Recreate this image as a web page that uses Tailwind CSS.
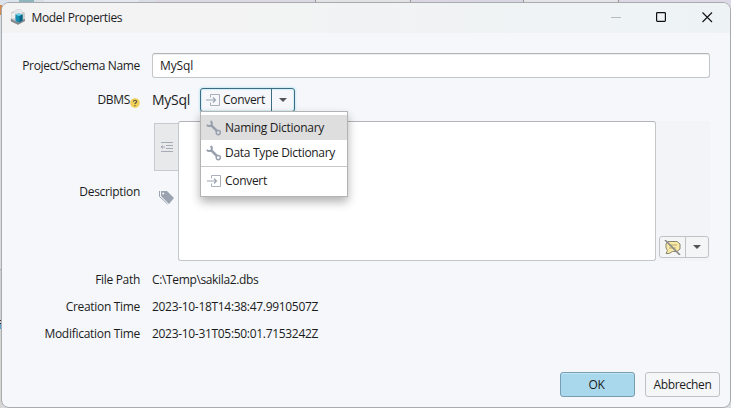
<!DOCTYPE html>
<html lang="en">
<head>
<meta charset="utf-8">
<title>Model Properties</title>
<script src="https://cdn.jsdelivr.net/npm/@tailwindcss/browser@4"></script>
</head>
<body class="w-[731px] h-[408px] overflow-hidden relative bg-[#dadbe0] font-['Open_Sans','Noto_Sans',sans-serif] text-[12px] leading-[18px] tracking-[-0.31px] text-[#1c1c1c]">
<svg width="0" height="0" class="absolute">
  <symbol id="convert" viewBox="0 0 14 14"><path d="M4.500 4.500V1.500h9v11h-9v-3" fill="none" stroke="#a9afbb"/><path d="M0 7h9.500M7 4.500 9.500 7 7 9.500" fill="none" stroke="#9ca3b0" stroke-width="1.100"/></symbol>
  <symbol id="wrench" viewBox="0 0 16 16"><path d="M.8 4.800C2.200 6.300 4 6.300 5.200 5.200 6.200 4 6 2.200 4.600 1" fill="none" stroke="#98a0ae" stroke-width="1.900"/><path d="M5.300 5.300 11 11" fill="none" stroke="#98a0ae" stroke-width="2.500"/><circle cx="12.300" cy="12.600" r="2.100" fill="none" stroke="#98a0ae" stroke-width="1.400"/></symbol>
</svg>
<!-- window behind the dialog -->
<div class="absolute inset-x-0 top-0 h-3 flex">
  <div class="w-[19px] bg-[#dce3ec]"></div><div class="w-[15px] bg-[#8eb4bc]"></div><div class="w-[10px] bg-[#d8dfe7]"></div><div class="w-[95px] bg-[#e4e8ee]"></div><div class="w-[16px] bg-[#d9dde4]"></div><div class="w-[161px] bg-[#dcd8e3] border-r border-[#96949d]"></div><div class="w-[95px] bg-[#e2e2e4] border-r border-[#96949d]"></div><div class="w-[113px] bg-[#dad6e2] border-r border-[#96949d]"></div><div class="w-[95px] bg-[#e4e4e6] border-r border-[#96949d]"></div><div class="grow bg-[#dcd8e6]"></div>
</div>
<div class="absolute left-0 top-0 w-[2px] h-full flex flex-col">
  <div class="h-[5px] bg-[#dce3ec]"></div><div class="h-[10px] bg-[#d18a4b]"></div><div class="h-[254px] bg-[#d8dce3]"></div><div class="h-px bg-[#a8a8ac]"></div><div class="h-[50px] bg-[#cfcfd3]"></div><div class="h-px bg-[#333]"></div><div class="h-[2px] bg-[#cfcfd3]"></div><div class="h-px bg-[#333]"></div><div class="h-[5px] bg-[#5ba4d4]"></div><div class="grow bg-[#d8d6d4]"></div>
</div>
<main class="absolute left-px top-[2px] w-[730px] h-[406px] rounded-[8px] border border-[#a9abaf] bg-[#f5f7fa] overflow-hidden flex flex-col">
  <header class="h-[30px] shrink-0 flex items-center pl-2 bg-linear-to-r from-[#f3f3f3] from-30% to-[#edf3f5]">
    <svg class="w-4 h-4 mb-[2px] shrink-0" viewBox="0 0 16 16"><path d="M1 3.500Q3 1.500 5 2.500V1Q9-.5 12 1v1.500Q14 2.500 15 4v8l-7 3.800L1 12.500Z" fill="#cbcdcf"/><path d="M5 1.500Q8.500 0 12 1.500v3H5Z" fill="#e6e8e9"/><path d="M.8 9.500 6 12.500 15 10v2l-7 3.800-7.200-3.500Z" fill="#85898d"/><path d="M1.500 4.500 5 3.500V9l-3.500.5Z" fill="#efefef"/><path d="m5.500 5.800 3-1.300 4 1v6l-3.500 2-3.500-1.500Z" fill="#168cb0"/><path d="m5.500 5.800 3-1.300 4 1-3.500 1.500Z" fill="#70d4e8"/><path d="m9.500 7 3-1.500v6l-3 1.700Z" fill="#0b6484"/></svg>
    <h1 class="ml-[5.5px] text-[12px] tracking-[-0.35px] whitespace-nowrap">Model Properties</h1>
    <div class="grow"></div>
    <svg class="w-[104px] h-3 mr-[17px] mb-[2px] shrink-0" viewBox="0 0 104 12"><path d="M2 6.500h10" stroke="#b9bdbf"/><rect x="47.600" y="1.600" width="8.800" height="8.800" rx=".8" fill="none" stroke="#111" stroke-width="1.200"/><path d="m93.500 1.500 9.500 9.500m0-9.500L93.500 11" stroke="#111" stroke-width="1.100"/></svg>
  </header>
  <form class="flex flex-col pt-5">
    <div class="h-[25px] flex items-center"><label class="w-[138px] text-right tracking-[-0.35px]">Project/Schema Name</label><div class="ml-3 w-[558px] h-[25px] border border-[#c4c6c9] border-t-[#b2b4b7] rounded-[3px] bg-white shadow-[inset_0_1px_1px_#eee] pl-[7px] leading-[24px] tracking-[-0.15px]">MySql</div></div>
    <div class="mt-[10px] h-[23px] flex items-center">
      <div class="w-[138px] flex justify-end items-center"><span>DBMS</span><svg class="w-[10px] h-[10px] mt-[7px] shrink-0" viewBox="0 0 10 10"><circle cx="5" cy="5" r="4.800" fill="#f1cf58"/><path d="M3.400 3.700C3.600 1.700 6.800 1.800 6.600 3.700 6.500 4.600 5.200 4.800 5 6M5 7.100v1.200" fill="none" stroke="#5e5741" stroke-width="1.200"/></svg></div>
      <span class="ml-3 w-[48px] text-[14px] tracking-[-0.3px]">MySql</span>
      <div class="h-[24px] w-[95px] flex border border-[#3d6c84] rounded-[3px] bg-[#f5f7fa] shadow-[0_0_2px_1px_#cbeaf5,inset_0_0_1px_1px_#d2edf6]">
        <div class="w-[71px] border-r border-[#3d6c84] flex items-center pl-[5px]"><svg class="w-[14px] h-[14px] mr-[3px] shrink-0"><use href="#convert"/></svg><span>Convert</span></div>
        <div class="grow grid place-items-center"><svg class="w-[8px] h-[4px]" viewBox="0 0 8 4"><path d="M0 0h8L4 4Z" fill="#555"/></svg></div>
      </div>
    </div>
    <div class="mt-[10px] h-[140px] flex">
      <label class="w-[138px] text-right pt-[62px] tracking-[-0.31px]">Description</label>
      <div class="ml-3 w-[558px] flex bg-[#f2f4f7]">
        <div class="w-[26px] bg-[#f5f7fa] pl-[2px] pt-[2px]">
          <div class="h-[48px] border border-r-0 border-[#c8cace] bg-[#e7e9eb] grid place-items-center"><svg class="w-3 h-[10px]" viewBox="0 0 12 10"><path d="M0 .5h12M5 3.500h7M5 6.500h7M0 9.500h12" stroke="#a4aab6"/><path d="M0 5h4M2 3.500 0 5l2 1.500" fill="none" stroke="#a4aab6"/></svg></div>
          <svg class="w-4 h-[15px] mt-[19px] ml-[5px]" viewBox="0 0 16 15"><path d="M2 1h6l7 7-5 6-8-8Z" fill="#9ba3b0"/><path d="M.5 1v5.500L8.500 14" fill="none" stroke="#9ba3b0"/><circle cx="4.200" cy="3.500" r="1.100" fill="#f5f7fa"/></svg>
        </div>
        <div class="w-[478px] border border-[#c4c6c9] border-t-[#b2b4b7] rounded-[3px] bg-white"></div>
        <div class="self-end mb-[3px] ml-[3px] w-[50px] h-[22px] shrink-0 flex border border-[#c0c2c4] rounded-[3px] bg-[#f3f5f7]">
          <div class="w-[26px] border-r border-[#c0c2c4] grid place-items-center"><svg class="w-[17px] h-[15px]" viewBox="0 0 17 15"><path d="M4 1.500h9l3 2.500v5l-3 2.500H8.500L5 13.500H2l1.500-3L2 8V4Z" fill="#fae8a5" stroke="#8b8772"/><path d="M5 5h8M5 8h7" stroke="#b6a878"/><path d="m1 0 15 15" stroke="#858789" stroke-width="1.600"/></svg></div>
          <div class="grow grid place-items-center"><svg class="w-[8px] h-[4px]" viewBox="0 0 8 4"><path d="M0 0h8L4 4Z" fill="#555"/></svg></div>
        </div>
      </div>
    </div>
    <div class="mt-[10px] grid grid-cols-[138px_auto] gap-x-3 gap-y-[9px]">
      <span class="text-right">File Path</span><span class="tracking-[-0.36px]">C:\Temp\sakila2.dbs</span>
      <span class="text-right">Creation Time</span><span>2023-10-18T14:38:47.9910507Z</span>
      <span class="text-right tracking-[-0.28px]">Modification Time</span><span>2023-10-31T05:50:01.7153242Z</span>
    </div>
  </form>
  <footer class="mt-auto mb-[10px] mr-[10px] flex justify-end gap-[10px]">
    <button class="w-[75px] h-[25px] border border-[#769db0] rounded-[3px] bg-[#a9d8ec] shadow-[inset_0_1px_#c4e7f5] pr-[2px]">OK</button>
    <button class="w-[75px] h-[25px] border border-[#bfc1c4] rounded-[3px] bg-[#f5f6f8] whitespace-nowrap tracking-[-0.35px]">Abbrechen</button>
  </footer>
</main>
<div class="absolute left-[200px] top-[111px] w-[148px] h-[86px] border border-[#b3b3b3] bg-white shadow-[0_5px_9px_rgba(0,0,0,0.3)] py-[3px]">
  <div class="h-[25px] flex items-center bg-[#dedede] pl-[5px] tracking-[-0.28px]"><svg class="w-4 h-4 mr-[3px] shrink-0"><use href="#wrench"/></svg>Naming Dictionary</div>
  <div class="h-[26px] flex items-center pl-[5px]"><svg class="w-4 h-4 mr-[3px] shrink-0"><use href="#wrench"/></svg>Data Type Dictionary</div>
  <div class="border-t border-[#c8c8c8] h-[28px] flex items-center pl-[6px]"><svg class="w-[14px] h-[14px] mr-1 shrink-0"><use href="#convert"/></svg>Convert</div>
</div>
</body>
</html>
